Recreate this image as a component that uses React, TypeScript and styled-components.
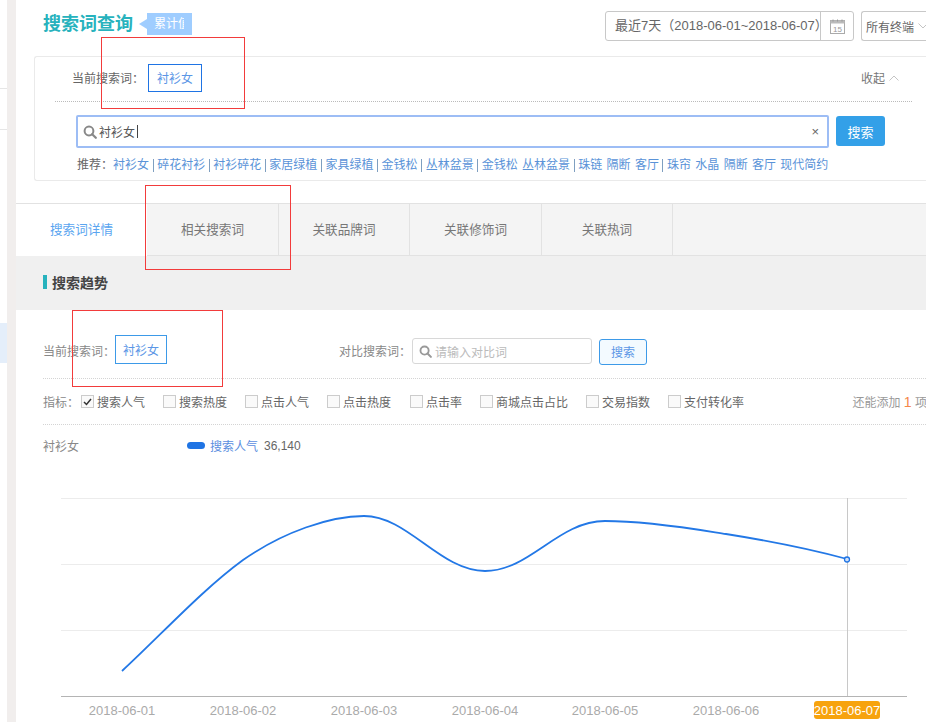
import React from "react";
import styled, { createGlobalStyle } from "styled-components";

const GlobalStyle = createGlobalStyle`
  html, body {
    margin: 0;
    padding: 0;
    background: #fff;
    overflow: hidden;
  }
  * {
    box-sizing: border-box;
  }
  body {
    font-family: "Liberation Sans", "Noto Sans CJK SC", sans-serif;
    font-size: 12px;
    color: #666;
  }
`;

const Page = styled.div`
  position: relative;
  width: 926px;
  height: 722px;
  display: flex;
  overflow: hidden;
`;

const Sidebar = styled.div`
  width: 7px;
  flex: none;
  background: #fff;
  display: flex;
  flex-direction: column;
`;

const SideRow = styled.div<{ $h: number; $active?: boolean; $line?: boolean }>`
  height: ${(p) => p.$h}px;
  background: ${(p) => (p.$active ? "#e4eefa" : "transparent")};
  border-bottom: ${(p) => (p.$line ? "1px solid #e6e6e6" : "none")};
`;

const Gutter = styled.div`
  width: 9px;
  flex: none;
  background: #f1eeed;
`;

const Main = styled.div`
  width: 910px;
  flex: none;
  overflow: hidden;
`;

const Header = styled.div`
  height: 56px;
  display: flex;
  align-items: flex-start;
  padding: 11px 0 0 27px;
`;

const Title = styled.h1`
  margin: 0;
  font-size: 18px;
  line-height: 27px;
  font-weight: 700;
  color: #27b2bd;
`;

const BadgeArrow = styled.div`
  width: 0;
  height: 0;
  margin: 8px 0 0 6px;
  border-style: solid;
  border-width: 5px 8px 5px 0;
  border-color: transparent #9fcdff transparent transparent;
`;

const Badge = styled.div`
  margin-top: 2px;
  width: 45px;
  height: 22px;
  background: #9fcdff;
  color: #fff;
  font-size: 12px;
  line-height: 22px;
  padding-left: 7px;
`;

const BadgeText = styled.div`
  width: 30px;
  white-space: nowrap;
  overflow: hidden;
`;

const HeaderRight = styled.div`
  margin-left: auto;
  display: flex;
  gap: 7px;
  margin-right: -25px;
`;

const DateBox = styled.div`
  display: flex;
  height: 30px;
  width: 249px;
  border: 1px solid #c8c8c8;
  border-radius: 3px;
  color: #666;
  font-size: 13px;
  line-height: 28px;
  white-space: nowrap;
`;

const DateText = styled.div`
  width: 215px;
  padding-left: 9px;
  border-right: 1px solid #c8c8c8;
`;

const DateIcon = styled.div`
  flex: 1;
  display: flex;
  align-items: center;
  justify-content: center;
`;

const SelectBox = styled.div`
  display: flex;
  align-items: center;
  height: 30px;
  width: 90px;
  padding-left: 4px;
  gap: 4px;
  border: 1px solid #c8c8c8;
  border-right: none;
  border-radius: 3px 0 0 3px;
  font-size: 12px;
  color: #666;
  white-space: nowrap;
`;

const FilterCard = styled.div`
  margin-left: 18px;
  width: 910px;
  height: 125px;
  border: 1px solid #eaeaea;
  border-right: none;
  border-radius: 3px 0 0 3px;
  padding: 0 0 0 20px;
`;

const CurrentRow = styled.div`
  width: 857px;
  height: 45px;
  display: flex;
  align-items: center;
  padding: 0 13px 3px 17px;
  border-bottom: 1px dotted #bbb;
`;

const CurrentLabel = styled.span`
  color: #666;
  font-size: 12px;
  width: 76px;
  white-space: nowrap;
`;

const WordChip = styled.span<{ $color: string; $w: number; $h: number }>`
  display: inline-flex;
  align-items: center;
  justify-content: center;
  width: ${(p) => p.$w}px;
  height: ${(p) => p.$h}px;
  border: 1px solid ${(p) => p.$color};
  color: #5b96e6;
  font-size: 12px;
`;

const Collapse = styled.span`
  margin-left: auto;
  display: flex;
  align-items: center;
  gap: 4px;
  color: #777;
  font-size: 12px;
`;

const SearchRow = styled.div`
  display: flex;
  gap: 7px;
  margin: 13px 0 0 21px;
`;

const SearchBox = styled.div`
  width: 753px;
  height: 33px;
  border: 2px solid #9dbdf5;
  border-radius: 2px;
  display: flex;
  align-items: center;
  gap: 2px;
  padding: 0 8px 0 5px;
  color: #555;
  font-size: 12px;
`;

const Caret = styled.span`
  width: 1px;
  height: 13px;
  background: #444;
`;

const ClearX = styled.span`
  margin-left: auto;
  color: #666;
  font-size: 13px;
  line-height: 1;
`;

const PrimaryButton = styled.button`
  width: 49px;
  height: 30px;
  margin-top: 1px;
  padding: 0;
  border: none;
  border-radius: 3px;
  background: #33a0e8;
  color: #fff;
  font: inherit;
  font-size: 13px;
`;

const Suggest = styled.div`
  margin: 9px 0 0 22px;
  display: flex;
  align-items: center;
  font-size: 12px;
  line-height: 16px;
  color: #666;
  white-space: nowrap;
`;

const SuggestLink = styled.a`
  color: #5a93d8;
  word-spacing: 1px;
`;

const Sep = styled.span`
  width: 1px;
  height: 13px;
  margin: 0 3.55px;
  background: #7f9fc0;
`;

const Tabs = styled.div`
  margin-top: 22px;
  height: 53px;
  display: flex;
  border-top: 1px solid #e2e2e2;
  background: #f4f4f4;
  border-bottom: 1px solid #e2e2e2;
`;

const Tab = styled.div<{ $w: number; $active?: boolean }>`
  width: ${(p) => p.$w}px;
  height: ${(p) => (p.$active ? "52px" : "51px")};
  display: flex;
  align-items: center;
  justify-content: center;
  padding-bottom: 3px;
  font-size: 12.6px;
  background: ${(p) => (p.$active ? "#fff" : "transparent")};
  color: ${(p) => (p.$active ? "#5aa5f0" : "#777")};
  border-right: ${(p) => (p.$active ? "none" : "1px solid #e2e2e2")};
`;

const SectionBar = styled.div`
  height: 54px;
  background: #f0f0f0;
  display: flex;
  align-items: center;
  padding: 0 0 2px 27px;
  gap: 5px;
`;

const SectionMark = styled.span`
  width: 4px;
  height: 14px;
  background: #27b2bd;
`;

const SectionTitle = styled.h2`
  margin: 0;
  font-size: 14px;
  font-weight: 700;
  color: #444;
`;

const TrendBody = styled.div`
  padding-left: 27px;
`;

const CompareRow = styled.div`
  height: 69px;
  display: flex;
  align-items: center;
  padding-top: 10px;
  width: 883px;
  border-bottom: 1px dotted #d4d4d4;
`;

const FieldLabel = styled.span<{ $w: number }>`
  width: ${(p) => p.$w}px;
  margin-top: 3px;
  white-space: nowrap;
  color: #888;
  font-size: 12px;
`;

const CompareLabel = styled(FieldLabel)`
  margin-left: 172px;
`;

const CompareInput = styled.div`
  width: 180px;
  height: 26px;
  border: 1px solid #d8d8d8;
  border-radius: 3px;
  display: flex;
  align-items: center;
  gap: 3px;
  padding-left: 6px;
  color: #bbb;
  font-size: 12px;
  margin-top: 4px;
`;

const GhostButton = styled.button`
  width: 48px;
  height: 26px;
  margin: 5px 0 0 7px;
  padding: 0;
  border: 1px solid #3d9ae8;
  border-radius: 3px;
  background: #f3faff;
  color: #5b96e6;
  font: inherit;
  font-size: 12px;
`;

const MetricRow = styled.div`
  height: 46px;
  width: 883px;
  display: flex;
  align-items: center;
  border-bottom: 1px dotted #d4d4d4;
`;

const MetricLabel = styled.span`
  width: 38px;
  color: #888;
  font-size: 12px;
  white-space: nowrap;
`;

const Metric = styled.label<{ $w: number }>`
  width: ${(p) => p.$w}px;
  display: flex;
  align-items: center;
  gap: 3px;
  white-space: nowrap;
  color: #666;
  font-size: 12px;
`;

const CheckBox = styled.span`
  width: 13px;
  height: 13px;
  border: 1px solid #ccc;
  background: #fafafa;
  display: flex;
  align-items: center;
  justify-content: center;
`;

const Remaining = styled.span`
  margin-left: auto;
  margin-right: -1px;
  color: #999;
  font-size: 12px;
  white-space: nowrap;
`;

const RemainingCount = styled.b`
  font-weight: 400;
  font-size: 14px;
  color: #f5884a;
`;

const LegendRow = styled.div`
  height: 41px;
  display: flex;
  align-items: center;
  font-size: 12px;
`;

const LegendName = styled.span`
  width: 144px;
  color: #888;
`;

const LegendDash = styled.span`
  width: 18px;
  height: 7px;
  border-radius: 4px;
  background: #1f74e4;
  margin-right: 5px;
`;

const LegendText = styled.span`
  color: #5b8ee0;
  margin-right: 6px;
`;

const LegendValue = styled.span`
  color: #666;
`;

const Chart = styled.svg`
  display: block;
  margin: 14px 0 0 -27px;
`;

const Annotation = styled.div<{ $x: number; $y: number; $w: number; $h: number }>`
  position: absolute;
  left: ${(p) => p.$x}px;
  top: ${(p) => p.$y}px;
  width: ${(p) => p.$w}px;
  height: ${(p) => p.$h}px;
  border: 1px solid #f23b3b;
  pointer-events: none;
`;

const SearchGlyph = ({ size, color }: { size: number; color: string }) => (
  <svg width={size} height={size} viewBox="0 0 14 14" fill="none">
    <circle cx="6" cy="6" r="4.4" stroke={color} strokeWidth="2" />
    <path d="M9.2 9.2L12.8 12.8" stroke={color} strokeWidth="2.2" strokeLinecap="round" />
  </svg>
);

const Chevron = ({ up }: { up?: boolean }) => (
  <svg width="10" height="6" viewBox="0 0 10 6" fill="none">
    <path d={up ? "M0.5 5.5L5 1L9.5 5.5" : "M0.5 0.5L5 5L9.5 0.5"} stroke="#c4c4c4" strokeWidth="1" />
  </svg>
);

const CalendarIcon = () => (
  <svg width="15" height="15" viewBox="0 0 15 15" fill="none">
    <rect x="0.5" y="1.5" width="14" height="13" fill="#fff" stroke="#aaa" />
    <rect x="0.5" y="1.5" width="14" height="3" fill="#bbb" />
    <path d="M3 0.5V2.5M7.5 0.5V2.5M12 0.5V2.5" stroke="#999" />
    <text x="7.5" y="12.5" fontSize="8" textAnchor="middle" fill="#999">15</text>
  </svg>
);

const suggestions = [
  "衬衫女",
  "碎花衬衫",
  "衬衫碎花",
  "家居绿植",
  "家具绿植",
  "金钱松",
  "丛林盆景",
  "金钱松 丛林盆景",
  "珠链 隔断 客厅",
  "珠帘 水晶 隔断 客厅 现代简约",
];

const tabs = [
  { label: "搜索词详情", w: 131, active: true },
  { label: "相关搜索词", w: 132 },
  { label: "关联品牌词", w: 131 },
  { label: "关联修饰词", w: 132 },
  { label: "关联热词", w: 131 },
];

const metrics = [
  { label: "搜索人气", w: 82, checked: true },
  { label: "搜索热度", w: 82 },
  { label: "点击人气", w: 82 },
  { label: "点击热度", w: 83 },
  { label: "点击率", w: 70 },
  { label: "商城点击占比", w: 106 },
  { label: "交易指数", w: 82 },
  { label: "支付转化率", w: 90 },
];

const dates = [
  { x: 122, label: "2018-06-01" },
  { x: 243, label: "2018-06-02" },
  { x: 364, label: "2018-06-03" },
  { x: 485, label: "2018-06-04" },
  { x: 605, label: "2018-06-05" },
  { x: 726, label: "2018-06-06" },
];

// chart coordinates are page coordinates shifted by the svg origin (16, 480)
const OX = 16;
const OY = 480;

const App = () => {
  return (
    <Page>
      <GlobalStyle />
      <Sidebar>
        <SideRow $h={89} $line />
        <SideRow $h={41} $line />
        <SideRow $h={193} />
        <SideRow $h={40} $active />
      </Sidebar>
      <Gutter />
      <Main>
        <Header>
          <Title>搜索词查询</Title>
          <BadgeArrow />
          <Badge>
            <BadgeText>累计值</BadgeText>
          </Badge>
          <HeaderRight>
            <DateBox>
              <DateText>最近7天（2018-06-01~2018-06-07）</DateText>
              <DateIcon>
                <CalendarIcon />
              </DateIcon>
            </DateBox>
            <SelectBox>
              所有终端
              <Chevron />
            </SelectBox>
          </HeaderRight>
        </Header>

        <FilterCard>
          <CurrentRow>
            <CurrentLabel>当前搜索词：</CurrentLabel>
            <WordChip $color="#1f74e4" $w={54} $h={28}>衬衫女</WordChip>
            <Collapse>
              收起
              <Chevron up />
            </Collapse>
          </CurrentRow>
          <SearchRow>
            <SearchBox>
              <SearchGlyph size={14} color="#888" />
              衬衫女
              <Caret />
              <ClearX>×</ClearX>
            </SearchBox>
            <PrimaryButton>搜索</PrimaryButton>
          </SearchRow>
          <Suggest>
            推荐：
            {suggestions.map((word, idx) => (
              <React.Fragment key={word}>
                {idx > 0 && <Sep />}
                <SuggestLink>{word}</SuggestLink>
              </React.Fragment>
            ))}
          </Suggest>
        </FilterCard>

        <Tabs>
          {tabs.map((tab) => (
            <Tab key={tab.label} $w={tab.w} $active={tab.active}>
              {tab.label}
            </Tab>
          ))}
        </Tabs>

        <SectionBar>
          <SectionMark />
          <SectionTitle>搜索趋势</SectionTitle>
        </SectionBar>

        <TrendBody>
          <CompareRow>
            <FieldLabel $w={72}>当前搜索词：</FieldLabel>
            <WordChip $color="#3d9ae8" $w={52} $h={29}>衬衫女</WordChip>
            <CompareLabel $w={73}>对比搜索词：</CompareLabel>
            <CompareInput>
              <SearchGlyph size={13} color="#999" />
              请输入对比词
            </CompareInput>
            <GhostButton>搜索</GhostButton>
          </CompareRow>

          <MetricRow>
            <MetricLabel>指标：</MetricLabel>
            {metrics.map((m) => (
              <Metric key={m.label} $w={m.w}>
                <CheckBox>
                  {m.checked && (
                    <svg width="9" height="8" viewBox="0 0 9 8" fill="none">
                      <path d="M1 4L3.5 6.5L8 1" stroke="#333" strokeWidth="1.5" />
                    </svg>
                  )}
                </CheckBox>
                {m.label}
              </Metric>
            ))}
            <Remaining>
              还能添加 <RemainingCount>1</RemainingCount> 项
            </Remaining>
          </MetricRow>

          <LegendRow>
            <LegendName>衬衫女</LegendName>
            <LegendDash />
            <LegendText>搜索人气</LegendText>
            <LegendValue>36,140</LegendValue>
          </LegendRow>

          <Chart width={910} height={242} viewBox={`${OX} ${OY} 910 242`}>
            {[498, 564, 630].map((y) => (
              <line key={y} x1={61} x2={907} y1={y + 0.5} y2={y + 0.5} stroke="#ececec" />
            ))}
            <line x1={61} x2={907} y1={696.5} y2={696.5} stroke="#b4b4b4" />
            <line x1={847.5} x2={847.5} y1={498} y2={696} stroke="#c8c8c8" />
            <path
              d="M122 671 C162 634 202 590 243 560 C283 532 330 516 364 516 C408 516 440 571 485 571 C530 571 558 521 605 521 C650 521 700 530 726 534 C770 541 810 549 847 559"
              fill="none"
              stroke="#2378e6"
              strokeWidth="1.8"
            />
            <circle cx={847} cy={559.5} r={2.5} fill="#cfe0f8" stroke="#1f74e4" strokeWidth="1.3" />
            {dates.map((d) => (
              <text key={d.label} x={d.x} y={715} textAnchor="middle" fontSize="13" fill="#aaa">
                {d.label}
              </text>
            ))}
            <rect x={814} y={701} width={66} height={18} rx={3} fill="#f7a30e" />
            <text x={847} y={715} textAnchor="middle" fontSize="13" fill="#fff">
              2018-06-07
            </text>
          </Chart>
        </TrendBody>
      </Main>

      <Annotation $x={101} $y={37} $w={144} $h={72} />
      <Annotation $x={145} $y={185} $w={146} $h={85} />
      <Annotation $x={72} $y={310} $w={151} $h={77} />
    </Page>
  );
};

export default App;
